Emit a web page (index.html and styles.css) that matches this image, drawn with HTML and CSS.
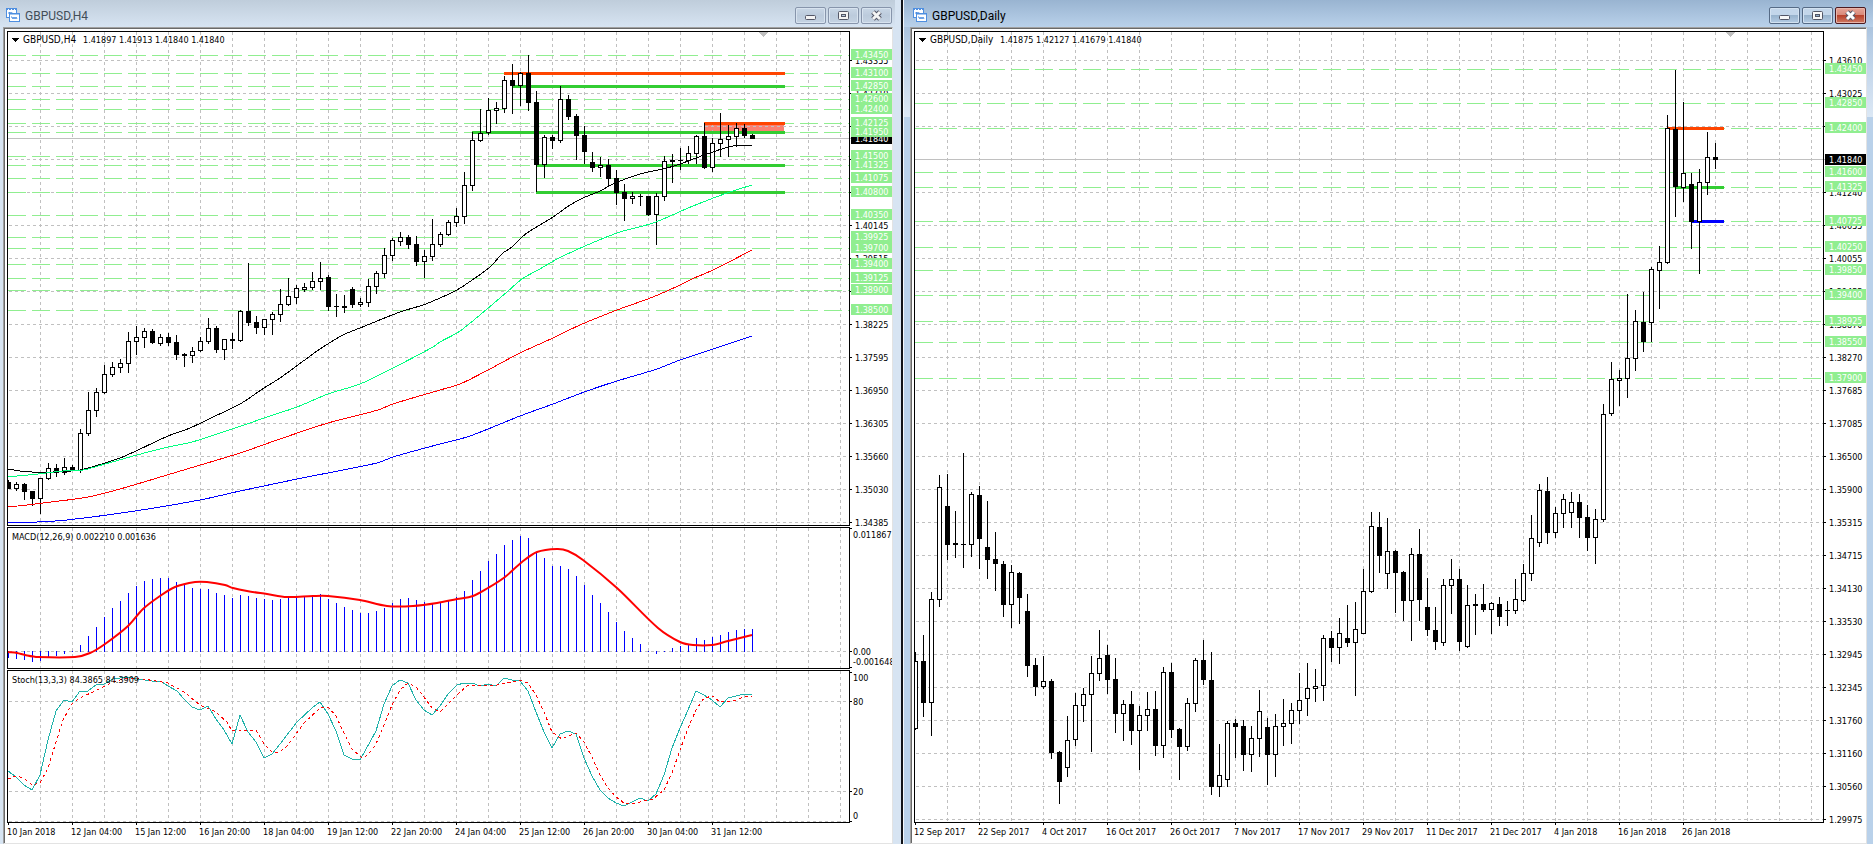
FILE: index.html
```html
<!DOCTYPE html>
<html lang="en">
<head>
<meta charset="utf-8">
<title>GBPUSD charts</title>
<link rel="stylesheet" href="styles.css">
</head>
<body>
<main class="desk">
  <section class="window window--idle" aria-labelledby="title-h4">
    <header class="titlebar">
      <svg class="titlebar__icon" viewBox="0 0 14 14" aria-hidden="true">
        <rect x="0.5" y="0.5" width="10" height="9" fill="#fff" stroke="#4f8fe0"/>
        <path d="M0 1h11" stroke="#4f8fe0" stroke-width="2" stroke-dasharray="2 1"/>
        <path d="M2 5h1l1-1 1 2 1-2" fill="none" stroke="#4f8fe0"/>
        <rect x="3.5" y="5.500" width="10" height="8" fill="#fff" stroke="#4f8fe0"/>
        <path d="M3 6h11" stroke="#4f8fe0" stroke-width="1"/>
        <path d="M5 9l1 0 1 2 1-2 1 2 1-2 1 2" fill="none" stroke="#4f8fe0"/>
      </svg>
      <h1 class="titlebar__text" id="title-h4">GBPUSD,H4</h1>
      <button class="winbtn" aria-label="Minimize"><svg viewBox="0 0 31 17"><rect x="10.500" y="8.500" width="10" height="4" rx="1" fill="#f4f4f4" stroke="#535666"/></svg></button>
      <button class="winbtn" aria-label="Restore"><svg viewBox="0 0 31 17"><rect x="10.500" y="4.500" width="10" height="8" rx="1" fill="#f4f4f4" stroke="#535666"/><rect x="13.500" y="7.500" width="4" height="2" fill="#b8c8da" stroke="#535666"/></svg></button>
      <button class="winbtn" aria-label="Close"><svg viewBox="0 0 31 17"><path d="M12 5l7 7M19 5l-7 7" stroke="#535666" stroke-width="5"/><path d="M12 5l7 7M19 5l-7 7" stroke="#f4f4f4" stroke-width="3"/></svg></button>
    </header>
    <div class="client client--panes">
      <svg class="plot" id="h4-price"></svg>
      <svg class="scale" id="h4-price-scale"></svg>
      <svg class="plot" id="h4-macd"></svg>
      <svg class="scale" id="h4-macd-scale"></svg>
      <svg class="plot" id="h4-stoch"></svg>
      <svg class="scale" id="h4-stoch-scale"></svg>
      <svg class="times" id="h4-times"></svg>
    </div>
  </section>

  <section class="window window--active" aria-labelledby="title-daily">
    <header class="titlebar">
      <svg class="titlebar__icon" viewBox="0 0 14 14" aria-hidden="true">
        <rect x="0.5" y="0.5" width="10" height="9" fill="#fff" stroke="#4f8fe0"/>
        <path d="M0 1h11" stroke="#4f8fe0" stroke-width="2" stroke-dasharray="2 1"/>
        <path d="M2 5h1l1-1 1 2 1-2" fill="none" stroke="#4f8fe0"/>
        <rect x="3.5" y="5.500" width="10" height="8" fill="#fff" stroke="#4f8fe0"/>
        <path d="M3 6h11" stroke="#4f8fe0" stroke-width="1"/>
        <path d="M5 9l1 0 1 2 1-2 1 2 1-2 1 2" fill="none" stroke="#4f8fe0"/>
      </svg>
      <h1 class="titlebar__text" id="title-daily">GBPUSD,Daily</h1>
      <button class="winbtn" aria-label="Minimize"><svg viewBox="0 0 31 17"><rect x="10.500" y="8.500" width="10" height="4" rx="1" fill="#f8f8f8" stroke="#535666"/></svg></button>
      <button class="winbtn" aria-label="Restore"><svg viewBox="0 0 31 17"><rect x="10.500" y="4.500" width="10" height="8" rx="1" fill="#f8f8f8" stroke="#535666"/><rect x="13.500" y="7.500" width="4" height="2" fill="#8fadca" stroke="#535666"/></svg></button>
      <button class="winbtn winbtn--close" aria-label="Close"><svg viewBox="0 0 31 17"><path d="M12 5l7 7M19 5l-7 7" stroke="#535666" stroke-width="5"/><path d="M12 5l7 7M19 5l-7 7" stroke="#fff" stroke-width="3"/></svg></button>
    </header>
    <div class="client client--single">
      <svg class="plot" id="daily-price"></svg>
      <svg class="scale" id="daily-price-scale"></svg>
      <svg class="times" id="daily-times"></svg>
    </div>
  </section>
</main>
<script src="charts.js"></script>
</body>
</html>
```
FILE: styles.css
```css
* { box-sizing: border-box; }

body {
  margin: 0;
  background: #b9d1ea;
  font-family: "DejaVu Sans Condensed", "DejaVu Sans", sans-serif;
  color: #000;
}

.desk {
  display: grid;
  grid-template-columns: 904fr 969fr;
  min-height: 100vh;
}

.window {
  display: flex;
  flex-direction: column;
  min-width: 0;
}

.window--idle {
  padding: 0 8px 0 3px;
  background: #d7e4f2;
  border-right: 1px solid #f4f7fb;
  box-shadow: inset -2px 0 0 #101318;
}

.window--idle .client { margin-right: 2px; }

.window--active {
  padding: 0 6px;
  background: linear-gradient(#99b4d1, #b4cbe4 40px, #dce8f5 117px, #b9d1ea 117px);
}

.titlebar {
  display: flex;
  align-items: flex-start;
  gap: 2px;
  height: 27px;
}

.window--idle .titlebar {
  margin: 0 0 0 -3px;
  padding: 7px 3px 0 6px;
  background: linear-gradient(#bfcddb, #d7e4f2);
}

.window--active .titlebar {
  margin: 0 -6px;
  padding: 7px 7px 0 9px;
  background: linear-gradient(#99b4d1, #b9d1ea);
}

.titlebar__icon { width: 14px; height: 14px; margin-top: 1px; }

.titlebar__text {
  flex: 1;
  margin: 0 0 0 3px;
  font: 12px/18px Roboto, sans-serif;
}

.window--idle .titlebar__text { color: #434e58; }

.winbtn {
  width: 31px;
  height: 17px;
  padding: 0;
  border: 1px solid #8795ab;
  border-radius: 2px;
  background: linear-gradient(#c9d7e6, #bccbdc 50%, #c5d3e2);
  box-shadow: inset 0 0 0 1px #d8e3ef;
}

.winbtn svg { display: block; width: 31px; height: 17px; margin: -1px; }

.window--active .winbtn {
  border-color: #566b86;
  background: linear-gradient(#c3d6ea 45%, #98b3cd 50%, #b4cce4);
  box-shadow: inset 0 0 0 1px #d3e2f1;
}

.window--active .winbtn--close {
  border-color: #4c1a20;
  background: linear-gradient(#e5a598, #d98a7b 45%, #b8412b 50%, #cf7a63);
  box-shadow: inset 0 0 0 1px #e8b5aa;
}

.client {
  display: grid;
  grid-template-columns: minmax(0, 1fr) 42px;
  row-gap: 1px;
  padding: 3px 0 0 3px;
  border: 1px solid #e3e3e3;
  border-top-color: #a0a0a0;
  border-left-color: #a0a0a0;
  background: #fff;
  box-shadow: inset 1px 1px 0 #696969;
}

.client--panes { grid-template-rows: 495px 142px 153px 19px; }
.client--single { grid-template-rows: 792px 19px; }

.plot {
  display: block;
  width: 100%;
  height: 100%;
  border: 1px solid #000;
  background: #fff;
  shape-rendering: crispEdges;
}

.scale { display: block; width: 42px; height: 100%; shape-rendering: crispEdges; }

.times {
  display: block;
  grid-column: 1 / -1;
  width: 100%;
  height: 20px;
  margin-top: -1px;
  shape-rendering: crispEdges;
}

.name { font-size: 10px; }
.label { font-size: 9px; }
.label--tag { fill: #fff; }

.grid { stroke: #c0c0c0; stroke-dasharray: 3 3; fill: none; }
.level { stroke: #90ee90; stroke-dasharray: 18 6; fill: none; }
.bid { fill: #c0c0c0; }
.tag { fill: #90ee90; }
.marker { fill: #c0c0c0; }
.zone { fill: #fa8072; }
.up { fill: #fff; stroke: #000; }
.histogram { fill: #00f; }

.line { fill: none; stroke-width: 1; }
.line--black { stroke: #000; }
.line--spring { stroke: #00ff7f; }
.line--red { stroke: #f00; }
.line--blue { stroke: #00f; }
.line--signal { stroke: #f00; stroke-width: 2; shape-rendering: auto; }
.line--k { stroke: #20b2aa; }
.line--d { stroke: #f00; stroke-dasharray: 3 3; }
```
FILE: charts.js
```js
// Candles: high, body top, body bottom, low, 1 when the bar closed down.
const h4Candles = [
  [480,482,488,488,1],[482,484,488,490,0],[483,484,491,499,1],[491,491,498,505,1],[478,478,498,513,0],
  [463,468,478,479,0],[464,468,472,476,1],[458,467,472,474,0],[465,467,469,470,1],[429,433,470,472,0],
  [392,410,433,435,0],[388,392,410,416,0],[365,374,392,393,0],[362,367,374,376,0],[359,363,367,372,0],
  [332,341,363,372,0],[326,337,341,354,0],[328,331,337,347,0],[329,331,342,343,1],[334,337,343,345,0],
  [333,337,342,345,1],[335,342,354,359,1],[353,354,355,366,1],[347,351,355,362,0],[337,341,350,351,0],
  [318,328,341,343,0],[326,328,349,352,1],[339,339,349,359,0],[333,339,340,348,1],[310,311,340,341,0],
  [263,311,322,325,1],[316,322,327,333,1],[319,319,327,334,0],[312,314,319,334,0],[289,304,314,321,0],
  [278,296,304,305,0],[285,288,297,303,0],[283,287,289,291,0],[272,281,287,289,0],[262,278,281,289,0],
  [275,277,306,310,1],[294,306,306,316,1],[295,306,307,312,1],[287,289,304,307,1],[298,302,304,306,0],
  [279,286,302,306,0],[271,273,286,293,0],[248,255,273,277,0],[238,240,255,260,0],[232,237,241,245,0],
  [235,237,244,248,1],[236,244,261,265,1],[250,256,261,277,0],[219,244,256,260,0],[232,234,244,246,0],
  [220,222,234,235,0],[208,216,222,226,0],[172,185,216,223,0],[132,140,185,190,0],[109,133,140,141,0],
  [98,110,132,134,0],[102,108,110,123,0],[76,80,108,112,0],[64,80,85,113,1],[72,73,85,105,0],
  [55,73,102,110,1],[91,102,164,191,1],[135,137,164,177,0],[135,137,140,148,1],[86,99,140,142,0],
  [95,99,116,119,1],[114,116,135,159,1],[126,135,151,163,1],[152,162,167,171,1],[157,165,167,176,0],
  [159,165,178,185,1],[170,178,192,204,1],[184,192,198,220,1],[192,196,198,203,0],[194,196,196,205,1],
  [196,196,214,215,1],[193,196,214,244,0],[156,161,196,200,0],[154,160,161,182,1],[148,160,160,169,1],
  [146,153,160,163,0],[135,136,153,163,0],[123,136,167,168,1],[138,143,167,171,0],[113,139,143,156,0],
  [125,136,139,156,0],[123,128,136,146,0],[124,128,135,137,1],[134,135,138,138,1]
];

const dailyCandles = [
  [652,661,728,729,0],[635,661,702,716,1],[592,599,702,735,0],[475,487,599,606,0],[474,506,544,559,1],
  [511,543,544,557,1],[453,544,544,567,1],[492,494,544,556,0],[486,495,538,568,1],[501,547,559,578,1],
  [532,559,563,590,1],[561,564,604,616,1],[565,572,604,627,0],[572,573,597,623,1],[594,611,665,676,1],
  [658,665,686,695,1],[656,681,686,688,0],[679,681,752,758,1],[751,752,781,803,1],[716,740,767,776,0],
  [693,705,739,745,0],[688,694,705,721,0],[656,673,694,751,0],[630,658,673,680,0],[645,655,679,693,1],
  [658,679,713,732,1],[700,704,713,740,0],[691,704,730,744,1],[706,715,730,769,0],[692,709,715,730,0],
  [691,709,745,755,1],[667,672,745,757,0],[663,672,729,737,1],[728,729,746,779,1],[698,703,746,750,0],
  [658,660,703,711,0],[640,660,679,684,1],[652,680,786,794,1],[744,775,786,796,0],[721,723,779,786,0],
  [719,723,726,757,1],[720,726,754,770,1],[726,738,754,771,0],[690,711,738,756,0],[718,727,754,784,1],
  [714,726,754,776,0],[699,723,726,745,0],[703,710,723,743,0],[673,700,710,723,0],[663,688,698,715,0],
  [669,686,688,701,0],[635,638,685,700,0],[631,638,647,661,1],[618,633,647,663,0],[605,638,642,646,1],
  [602,629,642,695,0],[569,591,633,633,0],[512,526,591,592,0],[512,527,555,572,1],[518,551,573,588,0],
  [550,551,572,612,1],[571,572,600,620,1],[548,554,600,640,0],[529,554,599,620,1],[578,607,629,635,1],
  [607,630,641,649,1],[579,585,642,645,0],[559,579,585,613,0],[569,579,641,650,1],[585,605,646,647,0],
  [594,604,605,634,1],[584,604,609,611,1],[602,603,609,633,0],[597,604,616,625,1],[601,610,610,625,1],
  [579,599,610,613,0],[564,573,600,601,0],[515,538,573,580,0],[484,490,542,546,0],[477,491,532,543,1],
  [507,513,532,537,0],[494,499,513,527,0],[492,502,512,527,0],[494,502,517,537,1],[505,517,537,550,1],
  [509,519,537,563,0],[404,414,519,521,0],[362,379,413,415,0],[370,378,380,405,0],[294,358,378,397,0],
  [310,321,358,370,0],[292,322,341,351,1],[267,269,322,341,0],[246,262,270,308,0],[115,128,262,263,0],
  [70,129,186,216,1],[102,173,187,201,0],[173,184,221,248,1],[169,182,221,273,0],[132,157,182,194,0],
  [143,157,159,168,1]
];

const macdBars = [
  657,658,659,661,660,656,655,653,651,645,636,627,617,608,601,593,586,581,579,578,578,582,585,588,589,589,
  593,595,598,595,596,598,599,600,599,598,598,597,595,594,599,603,607,610,613,613,611,608,603,599,598,600,
  602,603,603,601,597,591,580,571,561,554,545,540,536,538,552,558,566,566,569,576,585,595,603,612,622,631,
  638,644,651,653,651,648,646,645,638,640,637,635,632,630,629,629
];

const averages = {
  black: '8,469 20,471 32,472 42,473 53,472 80,470 105,463 120,458 136,451 168,436 190,428 213,417 240,404 264,388 280,378 302,362 320,349 343,335 360,328 400,312 423,305 440,298 457,290 475,278 490,267 503,253 512,247 522,237 530,231 553,217 570,205 583,198 600,191 613,184 640,174 667,168 680,164 707,154 733,146 752,146',
  spring: '8,477 17,476 38,474 63,471 83,470 105,464 137,455 168,447 192,442 217,434 247,424 264,418 297,407 328,394 360,384 393,368 433,347 440,342 460,331 487,309 507,292 522,279 538,270 563,256 617,233 653,223 693,206 727,193 752,185',
  red: '8,507 27,505 43,503 88,497 120,489 167,475 197,466 240,453 280,439 328,423 378,410 393,404 440,390 460,384 488,370 520,353 553,338 580,325 617,310 653,297 680,285 692,279 713,270 752,250',
  blue: '8,523 37,522 67,520 135,511 200,500 240,491 297,479 377,463 393,457 440,444 467,437 488,429 520,416 553,404 587,391 617,381 657,369 680,360 713,349 752,336'
};

const macdSignal = '8,652 17,653 25,655 38,657 75,657 90,653 105,644 128,626 143,609 160,596 175,587 195,582 207,582 225,585 233,588 247,591 267,594 287,597 313,596 328,596 360,600 387,606 413,606 437,603 457,599 473,596 488,588 505,577 522,562 537,552 557,549 568,551 583,560 617,588 658,628 680,642 693,645 712,645 728,641 752,635';

const stochK = '8,771 16,777 24,785 32,790 40,775 48,740 56,711 64,700 72,702 80,691 88,691 97,684 104,684 113,679 128,677 137,679 152,681 162,682 168,686 177,691 184,699 192,707 200,710 208,706 216,719 224,730 232,744 240,715 248,732 256,742 264,758 272,754 280,744 297,722 313,707 320,702 328,714 336,731 344,755 352,759 360,760 376,731 384,704 392,686 400,680 408,683 416,700 424,710 432,715 440,706 448,694 457,685 464,683 472,683 480,686 488,684 496,686 504,678 512,680 520,681 528,691 536,712 544,732 552,748 560,734 568,731 576,734 584,758 592,776 600,790 608,798 616,803 624,806 640,798 648,801 656,794 664,775 672,748 680,728 688,710 696,691 704,695 712,700 720,707 728,698 744,694 752,695';

const stochD = '8,779 16,776 24,778 32,785 40,783 48,768 56,742 63,720 72,704 80,698 97,690 113,682 123,679 137,678 168,683 184,692 200,705 216,712 227,722 232,731 240,730 256,730 264,744 272,752 280,752 288,745 304,723 320,708 328,707 336,716 344,733 352,749 362,758 368,755 376,744 384,725 392,705 400,690 408,683 416,687 424,697 432,708 440,712 448,704 457,695 468,685 480,685 497,685 507,683 520,680 528,683 536,695 544,712 552,732 562,739 576,733 584,742 592,757 600,775 608,788 616,797 624,803 632,804 640,802 653,799 664,790 672,773 680,750 688,728 696,710 704,698 713,696 720,702 733,701 744,697 752,696';

const FAR = 4000;

const text = (x, y, value, cls = 'label') => `<text x="${x}" y="${y}" class="${cls}">${value}</text>`;
const box = (x, y, w, h, attrs = '') => `<rect x="${x}" y="${y}" width="${w}" height="${h}" ${attrs}/>`;
const line = (points, name) => `<polyline points="${points}" class="line line--${name}"/>`;

// Catmull-Rom spline through the points, written as cubic segments.
function curve(points, name) {
  const p = points.split(' ').map(pair => pair.split(',').map(Number));
  let d = `M${p[0]}`;
  for (let i = 0; i < p.length - 1; i++) {
    const a = p[i - 1] || p[i], b = p[i], c = p[i + 1], e = p[i + 2] || c;
    const step = (c[0] - b[0]) / 3;
    const slope = (from, to) => (to[1] - from[1]) / (to[0] - from[0]);
    const c1 = [b[0] + step, b[1] + step * slope(a, c)];
    const c2 = [c[0] - step, c[1] - step * slope(b, e)];
    d += `C${c1} ${c2} ${c}`;
  }
  return `<path d="${d}" class="line line--${name}"/>`;
}

function verticals(firstX, top, bottom) {
  let d = '';
  for (let x = firstX; x < FAR; x += 32) d += `M${x + 0.5} ${top}V${bottom}`;
  return `<path class="grid" d="${d}"/>`;
}

function horizontals(rows, left, cls = 'grid') {
  return `<path class="${cls}" d="${rows.map(y => `M${left} ${y + 0.5}H${FAR}`).join('')}"/>`;
}

function candles(bars, left) {
  return bars.map(([high, top, bottom, low, down], i) => {
    const x = left + i * 8;
    const wick = box(x, high, 1, low - high + 1);
    const body = down
      ? box(x - 2, top, 5, bottom - top + 1)
      : box(x - 1.5, top + 0.5, 4, bottom - top, 'class="up"');
    return wick + body;
  }).join('');
}

function draw(id, left, top, content) {
  document.getElementById(id).innerHTML = `<g transform="translate(${-left} ${-top})">${content}</g>`;
}

function priceScale(id, left, labels, levels, bid) {
  let out = labels.map((value, i) => {
    const y = 60 + i * 33;
    return box(left, y, 2, 1) + text(left + 5, y + 4, value);
  }).join('');
  out += box(left, bid, 2, 1, 'class="bid"') + box(left + 1, bid - 5, 41, 11) + text(left + 5, bid + 4, '1.41840', 'label label--tag');
  out += levels.map(([y, value]) =>
    box(left + 1, y - 6, 41, 11, 'class="tag"') + text(left + 5, y + 3, value, 'label label--tag')).join('');
  draw(id, left, 31, out);
}

function timeScale(id, left, labels) {
  draw(id, left - 1, 823, labels.map((value, i) =>
    box(left + i * 64, 823, 1, 2) + text(left - 1 + i * 64, 835, value)).join(''));
}

const rows = count => Array.from({ length: count }, (_, i) => 60 + i * 33);

// GBPUSD, H4
const h4Levels = [[55,'1.43450'],[73,'1.43100'],[86,'1.42850'],[99,'1.42600'],[109,'1.42400'],[123,'1.42125'],
  [132,'1.41950'],[156,'1.41500'],[165,'1.41325'],[178,'1.41075'],[192,'1.40800'],[215,'1.40350'],[237,'1.39925'],
  [248,'1.39700'],[264,'1.39400'],[278,'1.39125'],[290,'1.38900'],[310,'1.38500']];

draw('h4-price', 8, 32,
  verticals(40, 32, 526) + horizontals(rows(15), 9) +
  horizontals(h4Levels.map(l => l[0]), 8, 'level') + box(8, 138, FAR, 1, 'class="bid"') +
  box(704, 124, 80, 8, 'class="zone"') +
  '<path class="grid" d="M705 126.500H784M712.500 124V132"/>' +
  box(504, 72, 281, 3, 'fill="#ff4500"') + box(512, 85, 273, 3, 'fill="#32cd32"') +
  box(472, 131, 313, 3, 'fill="#32cd32"') + box(536, 164, 249, 3, 'fill="#32cd32"') +
  box(536, 191, 249, 3, 'fill="#32cd32"') + box(704, 122, 81, 3, 'fill="#ff4500"') +
  candles(h4Candles, 8) +
  ['black', 'spring', 'red', 'blue'].map(n => curve(averages[n], n)).join('') +
  '<path class="marker" d="M758 32h10l-5 5z"/><path d="M11 38h8l-4 4z"/>' +
  text(23, 43, 'GBPUSD,H4', 'name') + text(83, 43, '1.41897 1.41913 1.41840 1.41840'));

priceScale('h4-price-scale', 850,
  ['1.43355','1.42710','1.42065','1.41425','1.40790','1.40145','1.39515','1.38870','1.38225','1.37595','1.36950',
   '1.36305','1.35660','1.35030','1.34385'], h4Levels, 138);

draw('h4-macd', 8, 528,
  verticals(40, 528, 668) + horizontals([651], 9) +
  macdBars.map((y, i) => box(8 + i * 8, Math.min(y, 651), 1, Math.abs(y - 651) + 1, 'class="histogram"')).join('') +
  curve(macdSignal, 'signal') + text(12, 540, 'MACD(12,26,9) 0.002210 0.001636'));

draw('h4-macd-scale', 850, 527,
  [528, 651, 667].map(y => box(850, y, 2, 1)).join('') +
  text(853, 538, '0.011867') + text(853, 655, '0.00') + text(853, 665, '-0.001648'));

draw('h4-stoch', 8, 671,
  verticals(40, 671, 822) + horizontals([701, 791, 821], 9) +
  line(stochK, 'k') + line(stochD, 'd') + text(12, 683, 'Stoch(13,3,3) 84.3865 84.3909'));

draw('h4-stoch-scale', 850, 670,
  [672, 701, 791, 821].map(y => box(850, y, 2, 1)).join('') +
  text(853, 681, '100') + text(853, 705, '80') + text(853, 795, '20') + text(853, 819, '0'));

timeScale('h4-times', 8, ['10 Jan 2018','12 Jan 04:00','15 Jan 12:00','16 Jan 20:00','18 Jan 04:00','19 Jan 12:00',
  '22 Jan 20:00','24 Jan 04:00','25 Jan 12:00','26 Jan 20:00','30 Jan 04:00','31 Jan 12:00']);

// GBPUSD, Daily
const dailyLevels = [[69,'1.43450'],[103,'1.42850'],[128,'1.42400'],[172,'1.41600'],[187,'1.41325'],[221,'1.40725'],
  [247,'1.40250'],[270,'1.39850'],[295,'1.39400'],[321,'1.38925'],[342,'1.38550'],[378,'1.37900']];

draw('daily-price', 915, 32,
  verticals(947, 32, 822) + horizontals(rows(24), 916) +
  horizontals(dailyLevels.map(l => l[0]), 915, 'level') + box(915, 159, FAR, 1, 'class="bid"') +
  box(1667, 127, 57, 3, 'fill="#ff4500"') + box(1675, 186, 49, 3, 'fill="#32cd32"') +
  box(1691, 220, 33, 3, 'fill="#00f"') +
  candles(dailyCandles, 915) +
  '<path class="marker" d="M1725 32h10l-5 5z"/><path d="M918 38h8l-4 4z"/>' +
  text(930, 43, 'GBPUSD,Daily', 'name') + text(1000, 43, '1.41875 1.42127 1.41679 1.41840'));

priceScale('daily-price-scale', 1824,
  ['1.43610','1.43025','1.42425','1.41840','1.41240','1.40655','1.40055','1.39455','1.38870','1.38270','1.37685',
   '1.37085','1.36500','1.35900','1.35315','1.34715','1.34130','1.33530','1.32945','1.32345','1.31760','1.31160',
   '1.30560','1.29975'], dailyLevels, 159);

timeScale('daily-times', 915, ['12 Sep 2017','22 Sep 2017','4 Oct 2017','16 Oct 2017','26 Oct 2017','7 Nov 2017',
  '17 Nov 2017','29 Nov 2017','11 Dec 2017','21 Dec 2017','4 Jan 2018','16 Jan 2018','26 Jan 2018']);
```
